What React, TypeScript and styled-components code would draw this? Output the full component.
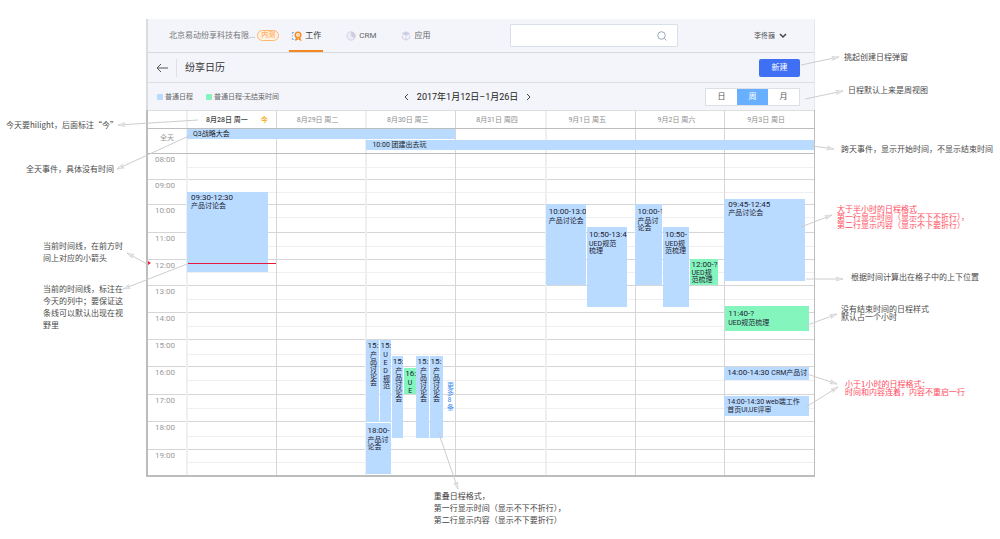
import React from 'react';
import styled, { createGlobalStyle, css } from 'styled-components';

const GlobalStyle = createGlobalStyle`
  * { box-sizing: border-box; }
  body {
    margin: 0;
    background: #fff;
    color: #444;
    font: 8px/12px Roboto, "Noto Sans CJK SC", sans-serif;
  }
  button, input { font: inherit; color: inherit; margin: 0; padding: 0; border: 0; background: none; }
  button { cursor: pointer; }
  a { color: inherit; text-decoration: none; }
`;

const LINE = '#d6d6d8';
const SOFT = '#efeff1';
const DARK = '#bdbdbd';
const PANEL = '#f4f5fb';
const BLUE = '#b9dbff';
const GREEN = '#84f5bd';

/* ---------- page ---------- */

const Page = styled.div`
  position: relative;
  display: grid;
  grid-template-columns: 146px minmax(0, 1fr) 185px;
  padding-top: 19px;
`;

const Notes = styled.aside`
  font-family: "Noto Sans CJK SC", sans-serif;
`;

const Note = styled.p<{ $gap: number; $indent: number; $tight?: boolean; $red?: boolean }>`
  margin: ${p => p.$gap}px 0 0 ${p => p.$indent}px;
  line-height: ${p => (p.$tight ? 8 : 12)}px;
  color: ${p => (p.$red ? '#ff4a5c' : '#4a4a4a')};
  white-space: pre;
`;

const Arrows = styled.svg<{ $side: 'left' | 'right' }>`
  position: absolute;
  top: 0;
  ${p => p.$side}: 0;
  pointer-events: none;
  z-index: 3;
`;

const FootNote = styled.div`
  position: relative;
  margin-left: 43%;
  padding-top: 13px;
  font-family: "Noto Sans CJK SC", sans-serif;
  white-space: pre;
  svg {
    position: absolute;
    left: 0;
    top: -48px;
    z-index: 3;
    pointer-events: none;
  }
`;

/* ---------- application bars ---------- */

const Bars = styled.div`
  background: ${PANEL};
  border-left: 2px solid #dcdce0;
  border-right: 1px solid #e6e6ee;
`;

const TopBar = styled.header`
  display: flex;
  align-items: center;
  height: 34px;
  padding: 0 27px 0 21px;
  border-bottom: 1px solid #d9dadf;
`;

const Company = styled.span`
  color: #777;
  white-space: nowrap;
`;

const Badge = styled.span`
  margin-left: 2px;
  width: 22px;
  border: 1px solid #ffb770;
  border-radius: 6px;
  background: #fff3e4;
  color: #ff9a3c;
  font-size: 7px;
  line-height: 9px;
  text-align: center;
`;

const Nav = styled.nav`
  display: flex;
  align-self: stretch;
  gap: 21px;
  margin-left: 10px;
`;

const NavLink = styled.a<{ $active?: boolean }>`
  display: flex;
  align-items: center;
  gap: 3px;
  height: 33px;
  padding: 0 2px;
  color: ${p => (p.$active ? '#333' : '#666')};
  border-bottom: 2px solid ${p => (p.$active ? '#f5871f' : 'transparent')};
  border-top: 2px solid transparent;
  white-space: nowrap;
`;

const Search = styled.label`
  display: flex;
  align-items: center;
  width: 168px;
  height: 23px;
  margin-left: 78px;
  padding: 0 10px;
  background: #fff;
  border: 1px solid #d8dfea;
  border-radius: 1px;
  input { flex: 1; min-width: 0; outline: none; }
`;

const UserButton = styled.button`
  display: flex;
  align-items: center;
  gap: 4px;
  margin-left: auto;
  color: #555;
  font-size: 7px;
`;

const TitleBar = styled.div`
  display: flex;
  align-items: center;
  height: 30px;
  padding: 0 14px 0 8px;
  border-bottom: 1px solid #dddee3;
`;

const IconButton = styled.button`
  display: flex;
  align-items: center;
`;

const Title = styled.h1`
  margin: 0 auto 0 8px;
  padding-left: 8px;
  border-left: 1px solid #dfe0e6;
  font-size: 10px;
  line-height: 18px;
  font-weight: 400;
  color: #333;
`;

const CreateButton = styled.button`
  width: 41px;
  height: 18px;
  border-radius: 2px;
  background: #3f6ff3;
  color: #fff;
`;

const ToolBar = styled.div`
  display: flex;
  align-items: center;
  height: 27px;
  padding: 0 14px 0 9px;
`;

const Legend = styled.div`
  display: flex;
  gap: 13px;
  flex: 249 1 0;
`;

const LegendItem = styled.span<{ $color: string }>`
  display: flex;
  align-items: center;
  gap: 2px;
  font-size: 7px;
  color: #666;
  white-space: nowrap;
  &::before {
    content: '';
    width: 6px;
    height: 6px;
    border-radius: 1px;
    background: ${p => p.$color};
  }
`;

const Period = styled.div`
  display: flex;
  align-items: center;
  gap: 8px;
  color: #222;
  font-size: 9px;
  white-space: nowrap;
`;

const SwitchWrap = styled.div`
  flex: 271 1 0;
  display: flex;
  justify-content: flex-end;
`;

const ViewSwitch = styled.div`
  display: flex;
  height: 18px;
  border: 1px solid #dcdfe6;
  background: #fff;
`;

const ViewButton = styled.button<{ $active?: boolean }>`
  width: 31px;
  color: ${p => (p.$active ? '#fff' : '#555')};
  background: ${p => (p.$active ? '#68b0ff' : '#fff')};
`;

/* ---------- week grid ---------- */

const Week = styled.section`
  border: solid ${DARK};
  border-width: 0 1px 2px 2px;
`;

const WeekRow = styled.div`
  display: grid;
  grid-template-columns: 38px repeat(7, minmax(0, 1fr));
`;

const HeadRow = styled(WeekRow)`
  border-top: 1px solid #dedede;
  border-bottom: 1px solid ${DARK};
  height: 19px;
`;

const AllDayRow = styled(WeekRow)`
  grid-template-rows: 11px 13px;
  border-bottom: 1px solid ${DARK};
`;

const columnLine = css<{ $soft?: boolean }>`
  border-left: ${p => (p.$soft ? `2px solid ${SOFT}` : `1px solid ${LINE}`)};
`;

const DayHead = styled.div<{ $soft?: boolean; $today?: boolean }>`
  ${columnLine}
  display: flex;
  align-items: center;
  justify-content: center;
  gap: 13px;
  padding-right: ${p => (p.$today ? 2 : 7)}px;
  padding-left: ${p => (p.$today ? 12 : 0)}px;
  font-size: 7px;
  font-weight: ${p => (p.$today ? 500 : 400)};
  color: ${p => (p.$today ? '#444' : '#8c8c8c')};
  white-space: nowrap;
`;

const TodayMark = styled.b`
  color: #f7b22c;
`;

const AllDayLabel = styled.div`
  grid-area: 1 / 1 / 3 / 2;
  padding: 3px 0 0 0;
  text-align: center;
  font-size: 7px;
  color: #999;
`;

const AllDayCell = styled.div<{ $col: number; $soft?: boolean }>`
  ${columnLine}
  grid-area: 1 / ${p => p.$col} / 3 / ${p => p.$col + 1};
`;

const AllDayBar = styled.div<{ $row: number; $from: number; $to: number }>`
  grid-area: ${p => p.$row} / ${p => p.$from} / ${p => p.$row + 1} / ${p => p.$to};
  height: 10px;
  margin-left: 1px;
  padding-left: 6px;
  background: ${BLUE};
  color: #222;
  font-size: 7px;
  line-height: 10px;
  white-space: nowrap;
  z-index: 1;
`;

const Body = styled(WeekRow)`
  position: relative;
`;

const HOUR_ROWS = '26px 25px 28px 27px 26px 27px 27px 27px 28px 27px 28px 25px';
const HALF_ROWS =
  '14px 12px 13px 12px 13px 15px 14px 13px 13px 13px 14px 13px 14px 13px 15px 12px 14px 14px 14px 13px 15px 13px 13px 12px';

const Hours = styled.div`
  display: grid;
  grid-template-rows: ${HOUR_ROWS};
`;

const Hour = styled.div`
  padding-left: 7px;
  color: #999;
  border-bottom: 1px solid ${LINE};
  &:last-child { border-bottom: 0; }
`;

const Day = styled.div<{ $soft?: boolean }>`
  ${columnLine}
  position: relative;
  display: grid;
  grid-template-rows: ${HALF_ROWS};
`;

const Slot = styled.div`
  border-bottom: 1px solid ${SOFT};
  &:nth-child(even) { border-bottom-color: ${LINE}; }
  &:nth-child(24) { border-bottom: 0; }
`;

type Box = { $x: number; $y: number; $w: number; $h: number };

const Event = styled.article<Box & { $green?: boolean; $vertical?: boolean; $pad?: number }>`
  position: absolute;
  left: ${p => p.$x}%;
  top: ${p => p.$y}px;
  width: ${p => p.$w}%;
  height: ${p => p.$h}px;
  margin-left: -1px;
  padding: 2px 0 0 ${p => (p.$vertical ? 1 : p.$pad ?? 4)}px;
  overflow: hidden;
  background: ${p => (p.$green ? GREEN : BLUE)};
  color: #223;
  line-height: 8px;
  z-index: 1;
`;

const Time = styled.div<{ $roomy?: boolean; $small?: boolean }>`
  white-space: pre;
  font-size: ${p => (p.$small ? 7 : 8)}px;
  padding: ${p => (p.$roomy ? '2px 0' : '0 0 1px')};
`;

const Text = styled.div<{ $vertical?: boolean }>`
  font-size: 7px;
  line-height: 7px;
  white-space: pre;
  ${p => p.$vertical && css`
    writing-mode: vertical-rl;
    text-orientation: upright;
    line-height: 10px;
  `}
`;

const MoreLink = styled.a`
  position: absolute;
  left: 89%;
  top: 228px;
  writing-mode: vertical-rl;
  text-orientation: upright;
  font-size: 7px;
  line-height: 8px;
  color: #3b8cf0;
`;

const NowLine = styled.div`
  position: absolute;
  left: 0;
  right: 0;
  top: 109px;
  height: 1px;
  background: #e8173f;
  z-index: 2;
`;

const NowMarker = styled.span`
  position: absolute;
  left: 0;
  top: 107px;
  border-left: 3px solid #f0213f;
  border-top: 2px solid transparent;
  border-bottom: 2px solid transparent;
`;

/* ---------- data ---------- */

type EventItem = {
  x: number; y: number; w: number; h: number;
  time: string; text: string;
  green?: boolean; vertical?: boolean; roomy?: boolean; inline?: boolean; small?: boolean; pad?: number;
};

type DayItem = { label: string; soft?: boolean; today?: boolean; events: EventItem[] };

const days: DayItem[] = [
  {
    label: '8月28日 周一', soft: true, today: true,
    events: [{ x: 0, y: 38, w: 92, h: 80, time: '09:30-12:30', text: '产品讨论会' }],
  },
  { label: '8月29日 周二', events: [] },
  {
    label: '8月30日 周三', soft: true,
    events: [
      { x: 0, y: 186, w: 14, h: 82, time: '15:', text: '产品讨论会', vertical: true },
      { x: 15, y: 186, w: 13, h: 82, time: '15:', text: 'UED规范', vertical: true },
      { x: 29, y: 202, w: 13, h: 82, time: '15:', text: '产品讨论会', vertical: true },
      { x: 43, y: 214, w: 13, h: 26, time: '16:', text: 'UE', vertical: true, green: true },
      { x: 57, y: 202, w: 14, h: 82, time: '15:', text: '产品讨论会', vertical: true },
      { x: 72, y: 202, w: 15, h: 82, time: '15:', text: '产品讨论会', vertical: true },
      { x: 0, y: 269, w: 28, h: 51, time: '18:00-', text: '产品讨\n论会', roomy: true, pad: 1 },
    ],
  },
  { label: '8月31日 周四', events: [] },
  {
    label: '9月1日 周五', soft: true,
    events: [
      { x: 0, y: 50, w: 46, h: 81, time: '10:00-13:0', text: '产品讨论会', roomy: true, pad: 3 },
      { x: 47, y: 73, w: 45, h: 80, time: '10:50-13:4', text: 'UED规范\n梳理', roomy: true, pad: 2 },
    ],
  },
  {
    label: '9月2日 周六',
    events: [
      { x: 0, y: 50, w: 31, h: 81, time: '10:00-1', text: '产品讨\n论会', roomy: true, pad: 3 },
      { x: 32, y: 73, w: 29, h: 80, time: '10:50-', text: 'UED规\n范梳理', roomy: true, pad: 2 },
      { x: 62, y: 105, w: 32, h: 26, time: '12:00-?', text: 'UED规\n范梳理', green: true, pad: 2 },
    ],
  },
  {
    label: '9月3日 周日',
    events: [
      { x: 0, y: 45, w: 91, h: 82, time: '09:45-12:45', text: '产品讨论会' },
      { x: 1, y: 152, w: 94, h: 25, time: '11:40-?', text: 'UED规范梳理', green: true, roomy: true, pad: 3 },
      { x: 0, y: 213, w: 95, h: 13, time: '14:00-14:30', text: 'CRM产品讨', inline: true, pad: 3 },
      { x: 0, y: 242, w: 95, h: 20, time: '14:00-14:30 web端工作', text: '首页UI,UE评审', small: true, pad: 3 },
    ],
  },
];

const hours = ['08', '09', '10', '11', '12', '13', '14', '15', '16', '17', '18', '19'];

const InlineEvent = styled(Event)`
  display: flex;
  align-items: baseline;
  gap: 2px;
`;

const EventCard = ({ e }: { e: EventItem }) => {
  const Card = e.inline ? InlineEvent : Event;
  return (
    <Card $x={e.x} $y={e.y} $w={e.w} $h={e.h} $green={e.green} $vertical={e.vertical} $pad={e.pad}>
      <Time $roomy={e.roomy} $small={e.small}>{e.time}</Time>
      <Text $vertical={e.vertical}>{e.text}</Text>
    </Card>
  );
};

/* ---------- drawings ---------- */

const Arrow = ({ from, to }: { from: [number, number]; to: [number, number] }) => {
  const angle = (Math.atan2(to[1] - from[1], to[0] - from[0]) * 180) / Math.PI;
  return (
    <g stroke="#cdcdcd" fill="#ececec">
      <line x1={from[0]} y1={from[1]} x2={to[0]} y2={to[1]} />
      <path d="M0 0L-7 -2L-5 0L-7 2Z" transform={`translate(${to[0]} ${to[1]}) rotate(${angle})`} strokeWidth=".6" />
    </g>
  );
};

const WorkIcon = () => (
  <svg width="11" height="10" viewBox="0 0 11 10" fill="none" aria-hidden="true">
    <path d="M3 1.5H1.3v1.6M1.3 4.4v1.2M1.3 6.8v1.7h1.5M4 8.5h1.4" stroke="#6aa6f7" strokeWidth=".9" />
    <path d="M5.6 6.4L5 9l2-1M8.4 6.4L9.6 9 7.6 8" stroke="#f5871f" strokeWidth="1.1" />
    <circle cx="7" cy="3.9" r="2.7" fill="#fff" stroke="#f98a20" strokeWidth="1.6" />
    <circle cx="7" cy="3.9" r=".9" fill="#ffb673" />
  </svg>
);

const CrmIcon = () => (
  <svg width="10" height="10" viewBox="0 0 10 10" fill="none" aria-hidden="true">
    <circle cx="5" cy="5" r="4.2" fill="#ececf6" stroke="#d3d3e6" />
    <path d="M5 .8A4.2 4.2 0 0 1 8.4 7.6L5 5Z" fill="#cfcfe2" />
  </svg>
);

const AppsIcon = () => (
  <svg width="10" height="10" viewBox="0 0 10 10" fill="none" aria-hidden="true">
    <path d="M5 .6l4 2-4 2.1-4-2.1z" fill="#cfcfe2" stroke="#cfcfe2" strokeWidth=".5" />
    <path d="M1.4 4.2v3L5 9.2l3.6-2v-3M5 5.6v3.4" stroke="#cfcfe2" />
  </svg>
);

const SearchIcon = () => (
  <svg width="10" height="10" viewBox="0 0 10 10" fill="none" stroke="#9aa8bd" aria-hidden="true">
    <circle cx="4.5" cy="4.5" r="3.8" />
    <path d="M7.2 7.2L9.4 9.4" />
  </svg>
);

const Chevron = ({ d, w, h }: { d: string; w: number; h: number }) => (
  <svg width={w} height={h} viewBox={`0 0 ${w} ${h}`} fill="none" stroke="#444" aria-hidden="true">
    <path d={d} />
  </svg>
);

/* ---------- app ---------- */

export default function App() {
  return (
    <>
      <GlobalStyle />
      <Page>
        <Notes>
          <Note $gap={100} $indent={6}>今天要hilight，后面标注“今”</Note>
          <Note $gap={32} $indent={26}>全天事件，具体没有时间</Note>
          <Note $gap={65} $indent={43}>{'当前时间线，在前方时\n间上对应的小箭头'}</Note>
          <Note $gap={19} $indent={43}>{'当前的时间线，标注在\n今天的列中；要保证这\n条线可以默认出现在视\n野里'}</Note>
        </Notes>

        <main>
          <Bars>
            <TopBar>
              <Company>北京易动纷享科技有限...</Company>
              <Badge>内测</Badge>
              <Nav>
                <NavLink href="#work" $active><WorkIcon />工作</NavLink>
                <NavLink href="#crm"><CrmIcon />CRM</NavLink>
                <NavLink href="#apps"><AppsIcon />应用</NavLink>
              </Nav>
              <Search>
                <input type="search" aria-label="搜索" />
                <SearchIcon />
              </Search>
              <UserButton type="button">
                李佟巍
                <svg width="8" height="6" viewBox="0 0 8 6" fill="none" stroke="#444" strokeWidth="1.5" aria-hidden="true">
                  <path d="M1 1l3 3 3-3" />
                </svg>
              </UserButton>
            </TopBar>
            <TitleBar>
              <IconButton type="button" aria-label="返回">
                <svg width="12" height="10" viewBox="0 0 12 10" fill="none" stroke="#555" aria-hidden="true">
                  <path d="M12 5H1M5 1L1 5l4 4" />
                </svg>
              </IconButton>
              <Title>纷享日历</Title>
              <CreateButton type="button">新建</CreateButton>
            </TitleBar>
            <ToolBar>
              <Legend>
                <LegendItem $color={BLUE}>普通日程</LegendItem>
                <LegendItem $color={GREEN}>普通日程-无结束时间</LegendItem>
              </Legend>
              <Period>
                <IconButton type="button" aria-label="上一周"><Chevron w={5} h={8} d="M4 1L1 4l3 3" /></IconButton>
                2017年1月12日–1月26日
                <IconButton type="button" aria-label="下一周"><Chevron w={5} h={8} d="M1 1l3 3-3 3" /></IconButton>
              </Period>
              <SwitchWrap>
                <ViewSwitch>
                  <ViewButton type="button">日</ViewButton>
                  <ViewButton type="button" $active aria-pressed="true">周</ViewButton>
                  <ViewButton type="button">月</ViewButton>
                </ViewSwitch>
              </SwitchWrap>
            </ToolBar>
          </Bars>

          <Week>
            <HeadRow>
              <div />
              {days.map(d => (
                <DayHead key={d.label} $soft={d.soft} $today={d.today}>
                  {d.label}
                  {d.today && <TodayMark>今</TodayMark>}
                </DayHead>
              ))}
            </HeadRow>
            <AllDayRow>
              <AllDayLabel>全天</AllDayLabel>
              {days.map((d, i) => <AllDayCell key={d.label} $col={i + 2} $soft={d.soft} />)}
              <AllDayBar $row={1} $from={2} $to={5}>Q3战略大会</AllDayBar>
              <AllDayBar $row={2} $from={4} $to={9}>10:00 团建出去玩</AllDayBar>
            </AllDayRow>
            <Body>
              <Hours>
                {hours.map(h => <Hour key={h}>{h}:00</Hour>)}
              </Hours>
              {days.map(d => (
                <Day key={d.label} $soft={d.soft}>
                  {hours.map(h => (
                    <React.Fragment key={h}><Slot /><Slot /></React.Fragment>
                  ))}
                  {d.events.map((e, i) => <EventCard key={i} e={e} />)}
                  {d.today && <NowLine />}
                  {d.label.startsWith('8月30') && <MoreLink href="#more">更多8条</MoreLink>}
                </Day>
              ))}
              <NowMarker />
            </Body>
          </Week>

          <FootNote>
            <svg width="30" height="64" aria-hidden="true">
              <Arrow from={[4, 2]} to={[24, 60]} />
            </svg>
            {'重叠日程格式，\n第一行显示时间（显示不下不折行），\n第二行显示内容（显示不下要折行）'}
          </FootNote>
        </main>

        <Notes>
          <Note $gap={32} $indent={29}>挑起创建日程弹窗</Note>
          <Note $gap={21} $indent={33}>日程默认上来是周视图</Note>
          <Note $gap={47} $indent={26}>跨天事件，显示开始时间，不显示结束时间</Note>
          <Note $gap={50} $indent={22} $tight $red>{'大于半小时的日程格式\n第一行显示时间（显示不下不折行），\n第二行显示内容（显示不下要折行）'}</Note>
          <Note $gap={42} $indent={36}>根据时间计算出在格子中的上下位置</Note>
          <Note $gap={22} $indent={26} $tight>{'没有结束时间的日程样式\n默认占一个小时'}</Note>
          <Note $gap={59} $indent={30} $tight $red>{'小于1小时的日程格式：\n时间和内容连着，内容不重启一行'}</Note>
        </Notes>

        <Arrows $side="left" width="200" height="300" aria-hidden="true">
          <Arrow from={[198, 120]} to={[118, 125]} />
          <Arrow from={[191, 135]} to={[117, 169]} />
          <Arrow from={[147, 264]} to={[127, 253]} />
          <Arrow from={[187, 264]} to={[123, 289]} />
        </Arrows>
        <Arrows $side="right" width="200" height="420" aria-hidden="true">
          <Arrow from={[1, 65]} to={[39, 57]} />
          <Arrow from={[5, 99]} to={[43, 91]} />
          <Arrow from={[12, 146]} to={[34, 149]} />
          <Arrow from={[1, 227]} to={[32, 215]} />
          <Arrow from={[6, 279]} to={[43, 279]} />
          <Arrow from={[5, 326]} to={[37, 314]} />
          <Arrow from={[7, 374]} to={[37, 384]} />
          <Arrow from={[6, 407]} to={[38, 387]} />
        </Arrows>
      </Page>
    </>
  );
}
